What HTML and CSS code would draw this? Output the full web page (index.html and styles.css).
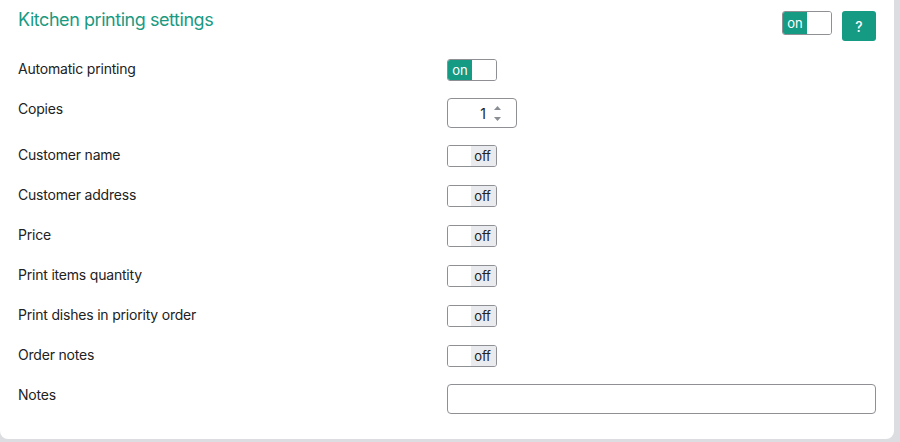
FILE: index.html
```html
<!DOCTYPE html>
<html>
<head>
<meta charset="utf-8">
<link rel="stylesheet" href="styles.css">
</head>
<body>
<div class="panel">
  <div class="header">
    <h1 class="title">Kitchen printing settings</h1>
    <div class="header-actions">
      <span class="toggle toggle-lg is-on"><span class="t-left">on</span><span class="t-right"></span></span>
      <button class="help">?</button>
    </div>
  </div>
  <div class="rows">
    <div class="row row-auto"><div class="label">Automatic printing</div><div class="control"><span class="toggle is-on"><span class="t-left">on</span><span class="t-right"></span></span></div></div>
    <div class="row row-copies"><div class="label">Copies</div><div class="control"><div class="spinner"><span class="spin-val">1</span><span class="spin-arrows"><svg width="9" height="22" viewBox="0 0 9 22"><path d="M1 8 L4.5 4 L8 8 Z" fill="#8a8d91"/><path d="M1 15 L4.5 19 L8 15 Z" fill="#8a8d91"/></svg></span></div></div></div>
    <div class="row"><div class="label">Customer name</div><div class="control"><span class="toggle is-off"><span class="t-left"></span><span class="t-right">off</span></span></div></div>
    <div class="row"><div class="label">Customer address</div><div class="control"><span class="toggle is-off"><span class="t-left"></span><span class="t-right">off</span></span></div></div>
    <div class="row"><div class="label">Price</div><div class="control"><span class="toggle is-off"><span class="t-left"></span><span class="t-right">off</span></span></div></div>
    <div class="row"><div class="label">Print items quantity</div><div class="control"><span class="toggle is-off"><span class="t-left"></span><span class="t-right">off</span></span></div></div>
    <div class="row"><div class="label">Print dishes in priority order</div><div class="control"><span class="toggle is-off"><span class="t-left"></span><span class="t-right">off</span></span></div></div>
    <div class="row row-last-toggle"><div class="label">Order notes</div><div class="control"><span class="toggle is-off"><span class="t-left"></span><span class="t-right">off</span></span></div></div>
    <div class="row row-notes"><div class="label">Notes</div><div class="control"><div class="text-input"></div></div></div>
  </div>
</div>
</body>
</html>
```
FILE: styles.css
```css
html, body {
  margin: 0;
  padding: 0;
  background: #dcdde1;
  font-family: "Inter", "Liberation Sans", sans-serif;
}
.panel {
  width: 894px;
  height: 439px;
  background: #fff;
  border-radius: 0 0 8px 8px;
  box-sizing: border-box;
  padding: 0 18px 0 18px;
}
.header {
  display: flex;
  justify-content: space-between;
  align-items: flex-start;
  height: 59px;
}
.title {
  margin: 8px 0 0 0;
  font-size: 18px;
  line-height: 24px;
  font-weight: 400;
  letter-spacing: -0.45px;
  color: #1a9a82;
}
.header-actions {
  display: flex;
  gap: 10px;
  margin-top: 11px;
}
.toggle {
  display: flex;
  width: 50px;
  height: 22px;
  box-sizing: border-box;
  border: 1px solid #8e9094;
  border-radius: 3px;
  overflow: hidden;
  font-size: 13px;
  letter-spacing: -0.1px;
}
.toggle-lg { height: 24px; }
.t-left, .t-right {
  flex: 1;
  display: flex;
  align-items: center;
  justify-content: center;
}
.is-on .t-left { background: #159a83; color: #fff; }
.is-on .t-right { background: #fff; }
.is-off .t-left { background: #fff; }
.is-off .t-right { background: #e9ebee; color: #222; padding-right: 2px; }
.help {
  width: 34px;
  height: 30px;
  border: none;
  border-radius: 3px;
  background: #159a83;
  color: #fff;
  font-family: inherit;
  font-size: 14px;
  font-weight: 500;
  padding: 0;
}
.row {
  display: grid;
  grid-template-columns: 429px 1fr;
  margin-bottom: 18px;
}
.row-auto { margin-bottom: 17px; }
.row-copies { margin-bottom: 17px; }
.row-last-toggle { margin-bottom: 17px; }
.label {
  font-size: 14px;
  line-height: 20px;
  letter-spacing: -0.2px;
  color: #222;
}
.row-copies .label, .row-notes .label { margin-top: 1px; }
.control { display: flex; }
.spinner {
  width: 70px;
  height: 30px;
  box-sizing: border-box;
  border: 1px solid #8e9094;
  border-radius: 4px;
  display: flex;
  align-items: center;
  justify-content: flex-end;
  padding-right: 14px;
  gap: 7px;
  font-size: 14px;
  color: #222;
}
.spin-arrows { display: flex; }
.text-input {
  width: 429px;
  height: 30px;
  box-sizing: border-box;
  border: 1px solid #8e9094;
  border-radius: 4px;
}
```
